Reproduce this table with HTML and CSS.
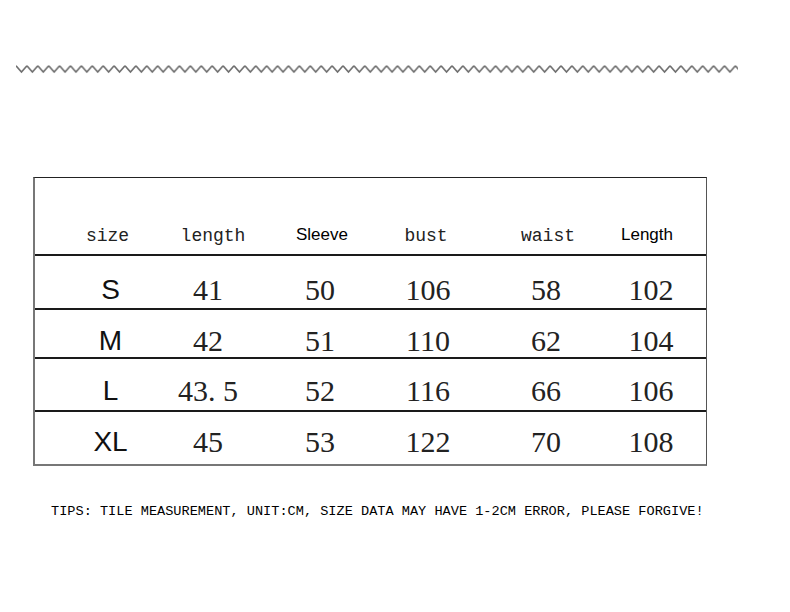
FILE: index.html
```html
<!DOCTYPE html>
<html>
<head>
<meta charset="utf-8">
<link rel="stylesheet" href="styles.css">
</head>
<body>
<div class="page">
  <svg class="wave" width="722" height="10" viewBox="0 0 722 10">
    <defs>
      <pattern id="zz" x="0" y="0" width="10.9" height="10" patternUnits="userSpaceOnUse">
        <path d="M0 1.8 L5.45 8 L10.9 1.8" fill="none" stroke="#6e6e6e" stroke-width="1.6"/>
      </pattern>
    </defs>
    <rect x="0" y="0" width="722" height="10" fill="url(#zz)"/>
  </svg>

  <div class="chart">
    <div class="row head">
      <div class="cell mono">size</div>
      <div class="cell mono">length</div>
      <div class="cell sans-sm">Sleeve</div>
      <div class="cell mono">bust</div>
      <div class="cell mono">waist</div>
      <div class="cell sans-sm">Length</div>
      <div class="cell"></div>
    </div>
    <div class="row data r-s">
      <div class="cell sans-lg">S</div>
      <div class="cell num">41</div>
      <div class="cell num">50</div>
      <div class="cell num">106</div>
      <div class="cell num">58</div>
      <div class="cell num">102</div>
      <div class="cell"></div>
    </div>
    <div class="row data r-m">
      <div class="cell sans-lg">M</div>
      <div class="cell num">42</div>
      <div class="cell num">51</div>
      <div class="cell num">110</div>
      <div class="cell num">62</div>
      <div class="cell num">104</div>
      <div class="cell"></div>
    </div>
    <div class="row data r-l">
      <div class="cell sans-lg">L</div>
      <div class="cell num">43. 5</div>
      <div class="cell num">52</div>
      <div class="cell num">116</div>
      <div class="cell num">66</div>
      <div class="cell num">106</div>
      <div class="cell"></div>
    </div>
    <div class="row data r-xl">
      <div class="cell sans-lg">XL</div>
      <div class="cell num">45</div>
      <div class="cell num">53</div>
      <div class="cell num">122</div>
      <div class="cell num">70</div>
      <div class="cell num">108</div>
      <div class="cell"></div>
    </div>
  </div>

  <p class="tips">TIPS: TILE MEASUREMENT, UNIT:CM, SIZE DATA MAY HAVE 1-2CM ERROR, PLEASE FORGIVE!</p>
</div>
</body>
</html>
```

FILE: styles.css
```css
html, body {
  margin: 0;
  padding: 0;
  background: #ffffff;
}

.page {
  display: flex;
  flex-direction: column;
  align-items: flex-start;
  padding-top: 64px;
}

.wave {
  display: block;
  margin-left: 16px;
}

.chart {
  margin-top: 103px;
  margin-left: 33px;
  width: 674px;
  box-sizing: border-box;
  border-top: 1px solid #222;
  border-left: 2px solid #777;
  border-right: 1px solid #555;
  border-bottom: 2px solid #777;
  display: flex;
  flex-direction: column;
}

.row {
  display: grid;
  box-sizing: border-box;
}

.head {
  grid-template-columns: 145px 66px 152px 56px 188px 10px 1fr;
  height: 76px;
  padding-top: 48px;
}

.data {
  grid-template-columns: 151px 44px 180px 36px 200px 10px 1fr;
  border-top: 2px solid #1a1a1a;
}

.r-s { height: 54px; padding-top: 19px; }
.r-m { height: 49px; padding-top: 16px; }
.r-l { height: 53px; padding-top: 17px; }
.r-xl { height: 54px; padding-top: 15px; }

.cell {
  min-width: 0;
  display: flex;
  justify-content: center;
  align-items: center;
  white-space: nowrap;
  color: #111;
}

.mono {
  font-family: "Liberation Mono", monospace;
  font-size: 18px;
  line-height: 20px;
  color: #222;
  height: 20px;
}

.sans-sm {
  font-family: "Liberation Sans", Arial, sans-serif;
  font-size: 17px;
  line-height: 20px;
  height: 20px;
  color: #000;
  margin-top: -1px;
}

.sans-lg {
  font-family: "Liberation Sans", Arial, sans-serif;
  font-size: 28px;
  line-height: 30px;
  height: 30px;
  color: #111;
}

.num {
  font-family: "Liberation Serif", "Times New Roman", serif;
  font-size: 30px;
  line-height: 30px;
  height: 30px;
  color: #222;
}

.tips {
  margin: 38px 0 0 51px;
  font-family: "Liberation Mono", monospace;
  font-size: 13.6px;
  line-height: 16px;
  color: #000;
  white-space: nowrap;
}
```
